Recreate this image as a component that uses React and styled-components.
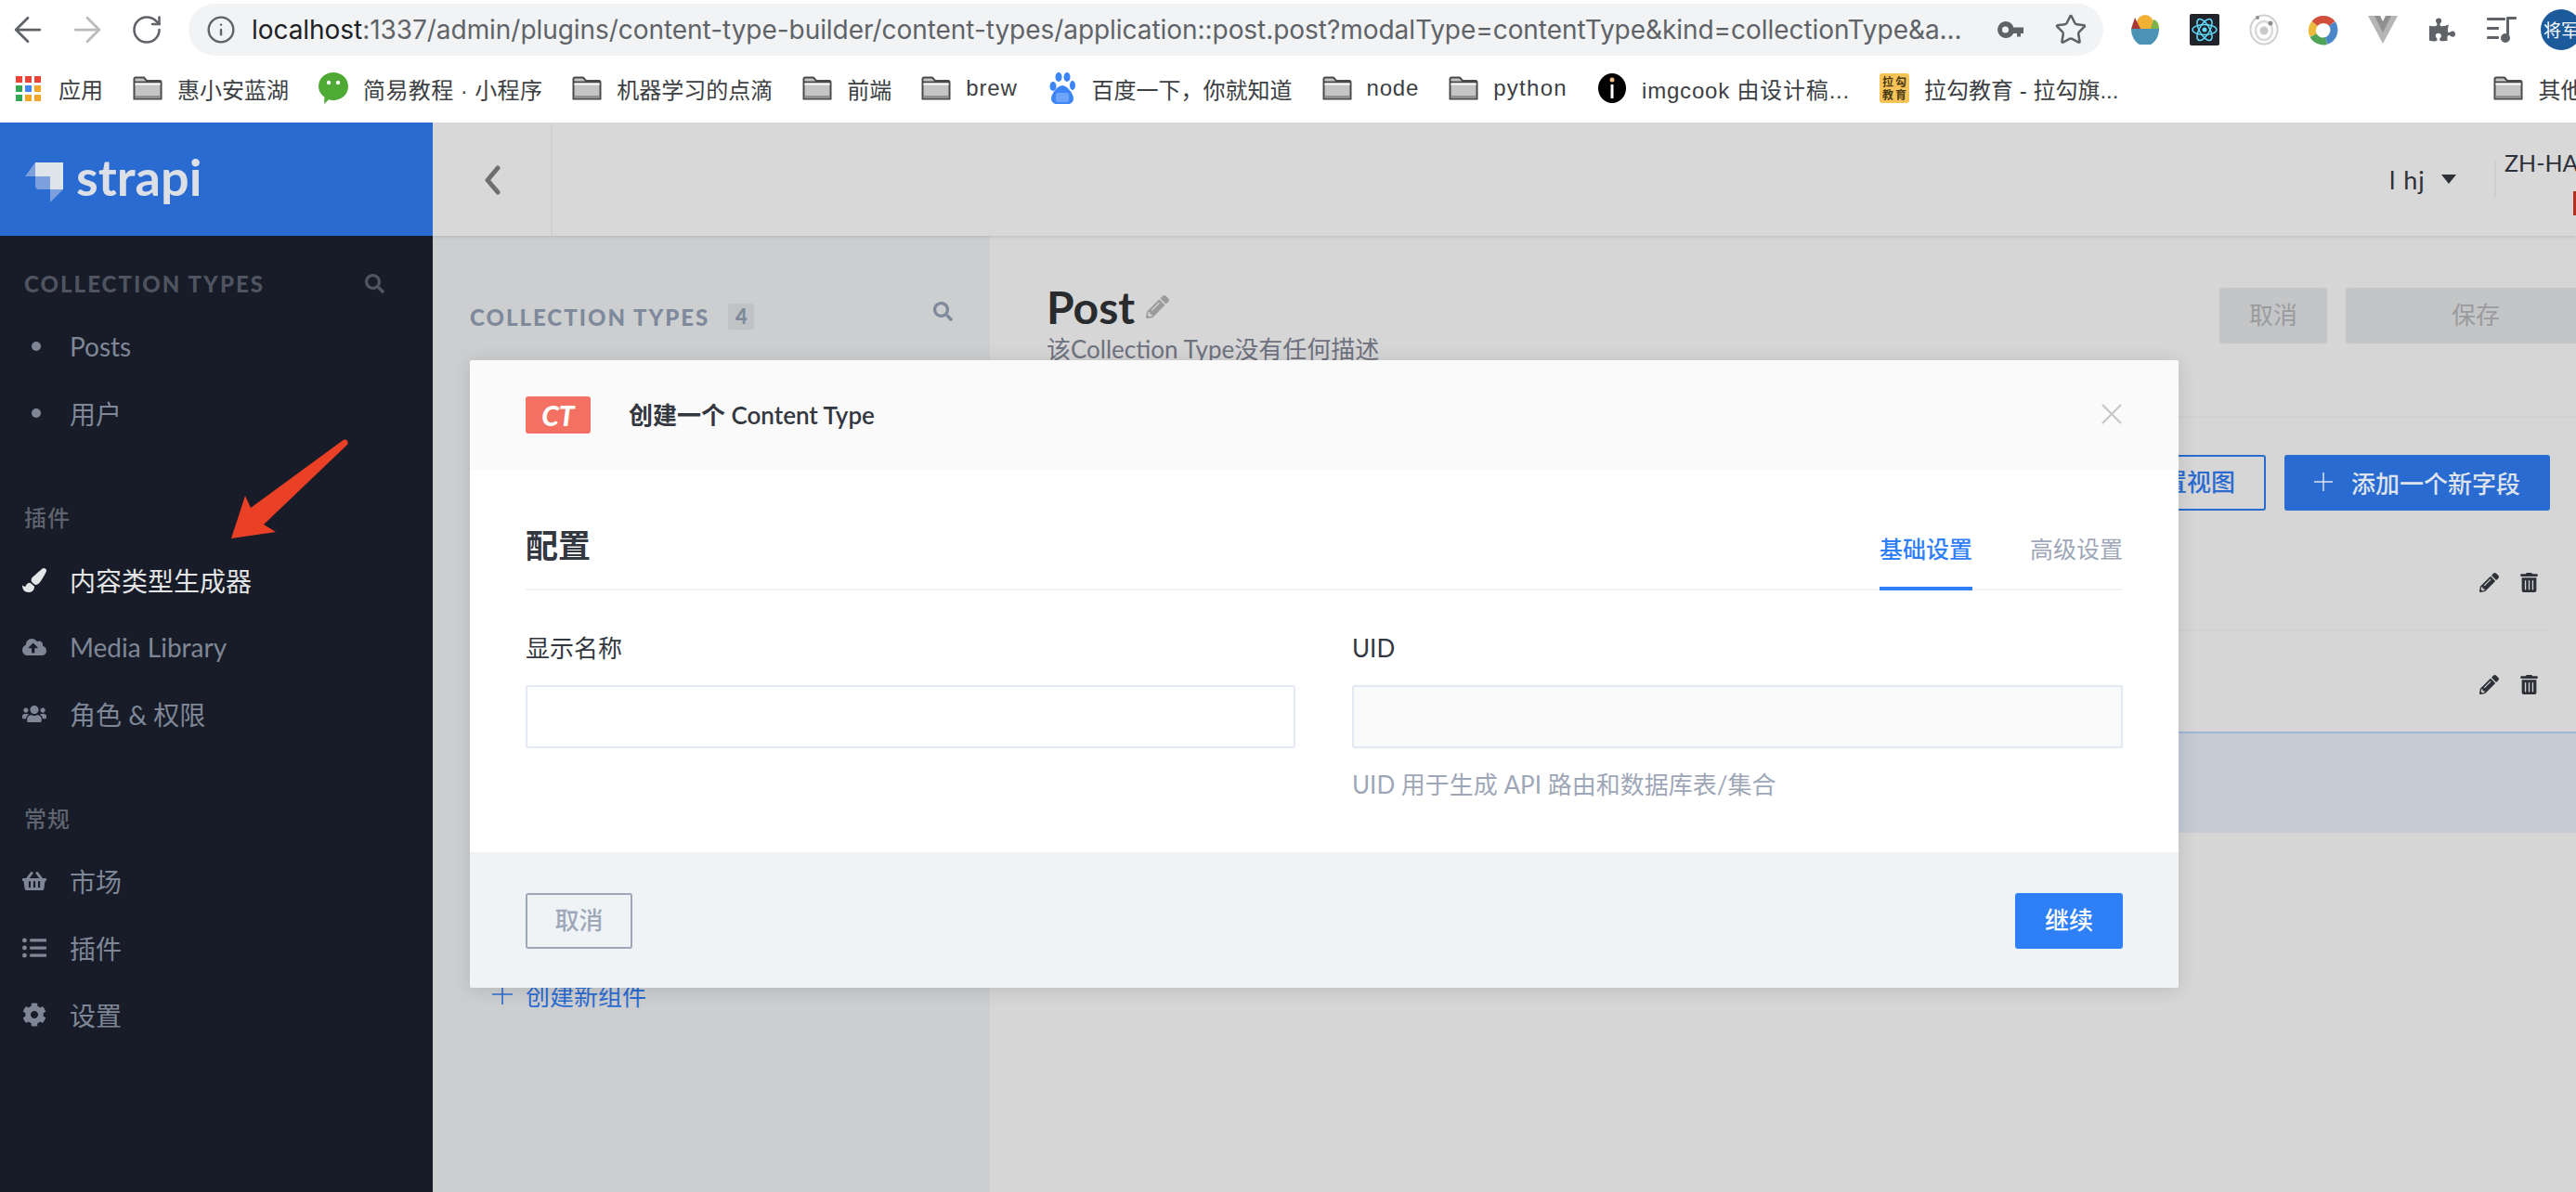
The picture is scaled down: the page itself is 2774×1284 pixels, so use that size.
import React from 'react';
import styled, { createGlobalStyle } from 'styled-components';
import { ArrowLeft, ArrowRight, RotateCw, Info, Star } from 'lucide-react';
import {
  FaSearch,
  FaPaintBrush,
  FaCloudUploadAlt,
  FaUsers,
  FaShoppingBasket,
  FaListUl,
  FaCog,
  FaPencilAlt,
  FaTrashAlt,
  FaPuzzlePiece,
} from 'react-icons/fa';

const CJK = `"Noto Sans CJK SC", sans-serif`;

const GlobalStyle = createGlobalStyle`
  html, body {
    margin: 0;
    padding: 0;
    height: 100%;
    overflow: hidden;
    background: #fff;
  }
  * { box-sizing: border-box; }
`;

const Page = styled.div`
  position: relative;
  width: 2774px;
  height: 1284px;
  overflow: hidden;
  font-family: Lato, ${CJK};
`;

/* browser */
const Toolbar = styled.div`
  display: flex;
  align-items: center;
  height: 64px;
  padding-left: 15px;
  background: #fff;
`;
const NavBtn = styled.div`
  display: flex;
  justify-content: center;
  width: 30px;
  margin-right: 34px;
  color: ${({ $off }) => ($off ? '#b9babc' : '#5f6368')};
  svg { flex-shrink: 0; }
`;
const UrlBar = styled.div`
  display: flex;
  align-items: center;
  flex: 0 0 2062px;
  height: 56px;
  margin-left: -4px;
  padding: 0 17px 0 19px;
  border-radius: 28px;
  background: #f1f3f4;
  color: #5f6368;
  svg { flex-shrink: 0; }
`;
const UrlText = styled.div`
  flex: 1;
  margin-left: 17px;
  font: 28px Inter, sans-serif;
  letter-spacing: -0.05px;
  white-space: nowrap;
  overflow: hidden;
  b {
    font-weight: 400;
    color: #202124;
  }
`;
const UrlIcon = styled.div`
  display: flex;
  margin-left: 32px;
  color: #5f6368;
`;
const Extensions = styled.div`
  display: flex;
  align-items: center;
  gap: 32px;
  margin-left: 29px;
`;
const ExtBox = styled.div`
  display: flex;
  justify-content: center;
  width: 32px;
  color: #5f6368;
`;
const Avatar = styled.div`
  flex: 0 0 44px;
  height: 44px;
  margin-left: -6px;
  border-radius: 50%;
  background: #1d5a9c;
  color: #fff;
  font: 19px/44px ${CJK};
  white-space: nowrap;
  padding-left: 3px;
  overflow: hidden;
`;
const Bookmarks = styled.div`
  display: flex;
  align-items: center;
  gap: 32px;
  height: 68px;
  padding: 0 0 6px 17px;
  background: #fff;
  white-space: nowrap;
`;
const Bookmark = styled.div`
  display: flex;
  align-items: center;
  gap: 16px;
  color: #3c4043;
  font: 24px "Liberation Sans", ${CJK};
  letter-spacing: ${({ $ls }) => $ls || 0}px;
`;
const AppsGrid = styled.div`
  display: grid;
  grid-template-columns: repeat(3, 7px);
  gap: 3px;
  margin-right: 3px;
`;
const AppDot = styled.i`
  display: block;
  height: 7px;
  background: ${({ $c }) => $c};
`;
const LagouIcon = styled.div`
  display: grid;
  grid-template-columns: 1fr 1fr;
  place-items: center;
  width: 32px;
  height: 32px;
  padding: 2px;
  border-radius: 3px;
  background: #f6c358;
  color: #4a3a12;
  font: 700 12px/14px ${CJK};
`;
const BarSeparator = styled.div`
  width: 2px;
  height: 32px;
  margin-left: 352px;
  margin-right: -12px;
  background: #d4d4d4;
`;

/* page */
const Workspace = styled.div`
  display: flex;
  height: 1152px;
`;
const Sidebar = styled.aside`
  flex: 0 0 466px;
  background: #171c28;
`;
const Logo = styled.div`
  display: flex;
  align-items: center;
  gap: 13px;
  height: 122px;
  padding: 0 0 4px 27px;
  background: #2a6bd2;
  color: #dcdfe5;
  font: 700 54px/1 Lato, sans-serif;
  svg { margin-top: 10px; }
`;
const SideBody = styled.div`
  padding-top: 30px;
`;
const SideSection = styled.section`
  margin-bottom: 55px;
`;
const SideHeading = styled.div`
  display: flex;
  align-items: center;
  justify-content: space-between;
  height: 40px;
  margin-bottom: 13px;
  padding: ${({ $cjk }) => ($cjk ? '0' : '2px')} 52px 0 26px;
  color: ${({ $cjk }) => ($cjk ? '#5f636e' : '#4f5460')};
  font-size: 24px;
  font-weight: ${({ $cjk }) => ($cjk ? 500 : 900)};
  letter-spacing: ${({ $cjk }) => ($cjk ? '1px' : '2.05px')};
`;
const NavItem = styled.div`
  display: flex;
  align-items: center;
  gap: 25px;
  height: 72px;
  padding-left: 24px;
  color: ${({ $active }) => ($active ? '#e4e5e6' : '#7f8797')};
  font-size: 28px;
`;
const NavIcon = styled.span`
  display: flex;
  justify-content: center;
  width: 26px;
`;
const Dot = styled.span`
  width: 10px;
  height: 10px;
  margin-left: 4px;
  border-radius: 50%;
  background: #7f8797;
`;
const ArrowMark = styled.svg`
  position: absolute;
  left: 245px;
  top: 470px;
`;

const Main = styled.div`
  flex: 1;
  min-width: 0;
  overflow: hidden;
`;
const TopBar = styled.header`
  display: flex;
  height: 122px;
  background: #d8d8d8;
  box-shadow: 0 1px 4px rgba(0, 0, 0, 0.12);
  position: relative;
`;
const BackBox = styled.div`
  display: flex;
  align-items: center;
  justify-content: center;
  width: 129px;
  margin-top: 2px;
  border-right: 2px solid #cfcfcf;
`;
const TopRight = styled.div`
  display: flex;
  align-items: center;
  flex: 0 0 201px;
  margin-left: auto;
  color: #2e3138;
  font: 24px Lato, sans-serif;
`;
const UserName = styled.span`
  font-size: 27px;
  letter-spacing: 1px;
  width: 56px;
  white-space: pre;
`;
const Caret = styled.span`
  flex: 0 0 16px;
  height: 0;
  border-left: 8px solid transparent;
  border-right: 8px solid transparent;
  border-top: 10px solid #2e3138;
`;
const LangBox = styled.div`
  flex: 0 0 88px;
  min-width: 0;
  height: 40px;
  margin-left: 41px;
  padding-left: 9px;
  border-left: 2px solid #cfcfcf;
  white-space: nowrap;
`;
const LangText = styled.div`
  margin-top: -14px;
  line-height: 32px;
  font-size: 25px;
`;
const Flag = styled.div`
  width: 30px;
  height: 26px;
  margin: 15px 0 0 74px;
  background: #b5301f;
`;
const Columns = styled.div`
  display: flex;
  height: 1030px;
`;
const SubNav = styled.div`
  flex: 0 0 600px;
  padding: 71px 40px 0;
  background: #cdced0;
`;
const SubHead = styled.div`
  display: flex;
  align-items: center;
  height: 32px;
  color: #7e899b;
  font-size: 24px;
  font-weight: 900;
  letter-spacing: 2px;
`;
const CountBadge = styled.span`
  width: 28px;
  height: 28px;
  margin-left: 20px;
  border-radius: 3px;
  background: #c0c2c6;
  font-size: 22px;
  line-height: 28px;
  text-align: center;
  letter-spacing: 0;
`;
const SubSearch = styled.span`
  display: flex;
  margin: -12px 0 0 auto;
`;
const AddLink = styled.div`
  display: flex;
  align-items: center;
  gap: 14px;
  height: 36px;
  margin: 696px 0 0 24px;
  color: #2a6bd2;
  font-size: 26px;
`;
const Content = styled.div`
  flex: 1;
  min-width: 0;
  background: #d6d6d6;
`;
const ContentHead = styled.div`
  display: flex;
  justify-content: space-between;
  height: 196px;
  padding: 48px 0 0 61px;
  border-bottom: 2px solid #d1d1d1;
`;
const PostTitle = styled.h1`
  display: flex;
  align-items: center;
  gap: 12px;
  margin: -1px 0 1px;
  height: 58px;
  color: #2a2b2e;
  font-size: 48px;
  font-weight: 700;
`;
const PostDesc = styled.div`
  margin-top: 0;
  color: #6e7180;
  font-size: 26px;
  line-height: 32px;
`;
const HeadActions = styled.div`
  display: flex;
  gap: 20px;
  margin: 8px -32px 0 0;
`;
const GhostBtn = styled.div`
  width: ${({ $w }) => $w}px;
  height: 60px;
  border-radius: 3px;
  background: #c4c5c7;
  color: #9a9b9d;
  font-size: 26px;
  line-height: 58px;
  text-align: center;
`;
const ContentBar = styled.div`
  display: flex;
  justify-content: flex-end;
  gap: 20px;
  margin-top: 40px;
  padding-right: 28px;
`;
const OutlineBtn = styled.div`
  height: 60px;
  padding: 0 31px;
  border: 2px solid #2a6bd2;
  border-radius: 3px;
  color: #2a6bd2;
  font-size: 26px;
  font-weight: 500;
  line-height: 54px;
`;
const PrimaryBtn = styled.div`
  display: flex;
  align-items: center;
  gap: 20px;
  width: 286px;
  height: 60px;
  padding: 0 0 2px 32px;
  border-radius: 3px;
  background: #2a6bd2;
  color: #dfe4ec;
  font-size: 26px;
  font-weight: 500;
`;
const FieldRow = styled.div`
  display: flex;
  justify-content: flex-end;
  align-items: center;
  gap: 22px;
  height: ${({ $h }) => $h}px;
  margin-right: 28px;
  padding: 6px 12px 0 0;
  color: #2e3138;
  border-bottom: ${({ $line }) => ($line ? '2px solid #d1d1d1' : '0')};
`;
const NewRow = styled.div`
  height: 109px;
  border-top: 2px solid #a0b6d4;
  background: #c5cbd5;
`;
const RowList = styled.div`
  margin-top: 21px;
`;

/* modal */
const Modal = styled.div`
  position: absolute;
  left: 506px;
  top: 388px;
  display: flex;
  flex-direction: column;
  width: 1840px;
  height: 676px;
  border-radius: 3px;
  background: #fff;
  box-shadow: 0 2px 20px rgba(0, 0, 0, 0.12);
  overflow: hidden;
`;
const ModalHead = styled.div`
  display: flex;
  align-items: center;
  height: 118px;
  padding: 0 60px;
  background: #fafafa;
`;
const CtBadge = styled.span`
  width: 70px;
  height: 40px;
  border-radius: 3px;
  background: #f37063;
  color: #fff;
  font-size: 30px;
  font-weight: 900;
  font-style: italic;
  line-height: 40px;
  text-align: center;
`;
const ModalTitle = styled.div`
  flex: 1;
  margin: -3px 0 0 41px;
  color: #333740;
  font-size: 26px;
  font-weight: 600;
`;
const CloseIcon = styled.span`
  display: flex;
  margin: -2px 1px 0 0;
  color: #c3c5c8;
`;
const ModalBody = styled.div`
  flex: 1;
  padding: 0 60px;
`;
const TitleRow = styled.div`
  display: flex;
  align-items: flex-end;
  justify-content: space-between;
  height: 130px;
  border-bottom: 2px solid #f3f4f8;
`;
const SectionTitle = styled.h2`
  margin: 0 0 22px;
  color: #333740;
  font-size: 35px;
  font-weight: 600;
  line-height: 50px;
`;
const Tabs = styled.div`
  display: flex;
  gap: 62px;
  margin-bottom: -2px;
`;
const Tab = styled.div`
  padding-bottom: 23px;
  border-bottom: 4px solid ${({ $on }) => ($on ? '#2f80f6' : 'transparent')};
  color: ${({ $on }) => ($on ? '#2f80f6' : '#9ea7b8')};
  font-size: 25px;
  font-weight: ${({ $on }) => ($on ? 500 : 400)};
  line-height: 36px;
`;
const FieldGrid = styled.div`
  display: grid;
  grid-template-columns: 829px 830px;
  gap: 61px;
  margin-top: 44px;
`;
const Label = styled.div`
  color: #333740;
  font-size: 26px;
  line-height: 36px;
`;
const TextBox = styled.div`
  height: 68px;
  margin-top: 22px;
  border: 2px solid #e3e9f3;
  border-radius: 3px;
  background: ${({ $off }) => ($off ? '#fafafa' : '#fff')};
`;
const Hint = styled.div`
  margin-top: 21px;
  color: #9ea7b8;
  font-size: 26px;
  line-height: 36px;
`;
const ModalFoot = styled.div`
  display: flex;
  justify-content: space-between;
  height: 146px;
  padding: 44px 60px 0;
  background: #eff3f6;
`;
const CancelBtn = styled.div`
  width: 115px;
  height: 60px;
  border: 2px solid #9ea7b8;
  border-radius: 3px;
  color: #9ea7b8;
  font-size: 26px;
  font-weight: 500;
  line-height: 54px;
  text-align: center;
`;
const ContinueBtn = styled.div`
  width: 116px;
  height: 60px;
  border-radius: 3px;
  background: #2f80f6;
  color: #fff;
  font-size: 26px;
  font-weight: 500;
  line-height: 58px;
  text-align: center;
`;

const ThinPlus = ({ size }) => (
  <svg width={size} height={size} viewBox="0 0 22 22" stroke="currentColor" strokeWidth="1.6">
    <path d="M11 0v22M0 11h22" />
  </svg>
);

const ThinX = () => (
  <svg width="22" height="22" viewBox="0 0 22 22" stroke="currentColor" strokeWidth="2">
    <path d="M1 1l20 20M21 1L1 21" />
  </svg>
);

const Folder = () => (
  <svg width="32" height="26" viewBox="0 0 32 26">
    <path d="M1.5 24.5V3a1.5 1.5 0 0 1 1.5-1.5h9l3 3.5h14a1.5 1.5 0 0 1 1.5 1.5v18z" fill="#c4c4c4" stroke="#4a4a4a" strokeWidth="2" />
    <path d="M2 6.5h28" stroke="#4a4a4a" strokeWidth="2" />
    <path d="M2.5 7.5h27v2h-27z" fill="#fff" />
    <path d="M2.5 21h27v3h-27z" fill="#8f8f8f" />
  </svg>
);

const WeChat = () => (
  <svg width="32" height="36" viewBox="0 0 32 36">
    <path d="M16 1c8.8 0 16 6.6 16 15s-7.2 15-16 15c-1.800 0-3.500-.3-5-.8L6 35l.5-7.500C2.500 24.700 0 20.600 0 16 0 7.600 7.200 1 16 1z" fill="#4faa35" />
    <circle cx="11" cy="12" r="2.200" fill="#fff" />
    <circle cx="21" cy="12" r="2.200" fill="#fff" />
  </svg>
);

const Baidu = () => (
  <svg width="32" height="34" viewBox="-2 0 32 34">
    <g fill="#3d84f7">
      <ellipse cx="4" cy="15" rx="3.500" ry="5" />
      <ellipse cx="10" cy="5" rx="3.500" ry="5" />
      <ellipse cx="19" cy="5" rx="3.500" ry="5" />
      <ellipse cx="25" cy="14" rx="3" ry="5" />
      <path d="M14 14c5 0 12 9 12 14 0 4-3 6-6 6H8c-3 0-6-2-6-6 0-5 7-14 12-14z" />
    </g>
    <rect x="7" y="22" width="14" height="10" rx="2" fill="#fff" opacity=".25" />
  </svg>
);

const ImgCook = () => (
  <svg width="32" height="32" viewBox="0 0 32 32">
    <ellipse cx="16" cy="16" rx="15" ry="16" fill="#000" />
    <rect x="14.500" y="12" width="3" height="15" fill="#fff" />
    <circle cx="16" cy="7" r="2.500" fill="#f0bb84" />
  </svg>
);

const Key = () => (
  <svg width="30" height="20" viewBox="0 0 30 20">
    <path fillRule="evenodd" d="M9.500 1a9 9 0 0 1 8.700 6.500H29v6.500h-3v3.500h-4V14h-3.800A9 9 0 1 1 9.500 1zm0 5.500a3.500 3.500 0 1 0 0 7 3.500 3.500 0 0 0 0-7z" fill="#5f6368" />
  </svg>
);

const Bowl = () => (
  <svg width="32" height="34" viewBox="0 0 32 34">
    <circle cx="16" cy="10" r="9" fill="#f2b134" />
    <path d="M1 16L5 4l6 12z" fill="#a8393a" />
    <path d="M22 16l3-10c4 1 6 5 6 10z" fill="#7db24a" />
    <path d="M1 16h30c0 9-5 15-9 17H10C6 31 1 25 1 16z" fill="#4a93b5" />
  </svg>
);

const ReactExt = () => (
  <svg width="32" height="34" viewBox="0 0 32 34">
    <rect width="32" height="34" rx="2" fill="#20232a" />
    <g fill="none" stroke="#61dafb" strokeWidth="1.500">
      <ellipse cx="16" cy="17" rx="13" ry="5.500" />
      <ellipse cx="16" cy="17" rx="13" ry="5.500" transform="rotate(60 16 17)" />
      <ellipse cx="16" cy="17" rx="13" ry="5.500" transform="rotate(120 16 17)" />
    </g>
    <circle cx="16" cy="17" r="2.500" fill="#61dafb" />
  </svg>
);

const RingExt = () => (
  <svg width="32" height="34" viewBox="0 0 32 34">
    <ellipse cx="16" cy="17" rx="14.500" ry="15.500" fill="none" stroke="#cfcfcf" strokeWidth="2" />
    <ellipse cx="16" cy="18" rx="9" ry="10" fill="none" stroke="#dadada" strokeWidth="2.500" />
    <circle cx="16" cy="18" r="4.500" fill="#c9c9c9" />
    <circle cx="23" cy="10" r="2.500" fill="#8f8f8f" />
    <circle cx="9" cy="4" r="2" fill="#8f8f8f" />
  </svg>
);

const GoogleRing = () => (
  <svg width="32" height="34" viewBox="0 0 32 34" fill="none" strokeWidth="8">
    <path d="M6.500 10.500A12.500 12.500 0 0 1 25.500 10.500" stroke="#d0503c" />
    <path d="M25.500 10.500A12.500 12.500 0 0 1 19 29" stroke="#4a86c8" />
    <path d="M19 29A12.500 12.500 0 0 1 5 23" stroke="#4fa458" />
    <path d="M5 23A12.500 12.500 0 0 1 6.500 10.500" stroke="#edb93b" />
  </svg>
);

const VueExt = () => (
  <svg width="32" height="30" viewBox="0 0 32 30">
    <path d="M0 0h12l4 7 4-7h12L16 30z" fill="#b5b5b5" />
    <path d="M7 0h6l3 6 3-6h6L16 18z" fill="#8f8f8f" />
  </svg>
);

const MusicExt = () => (
  <svg width="32" height="30" viewBox="0 0 32 30" fill="#5f6368">
    <rect x="0" y="2" width="20" height="3" rx="1" />
    <rect x="0" y="12" width="13" height="3" rx="1" />
    <rect x="0" y="22" width="13" height="3" rx="1" />
    <rect x="21" y="2" width="3" height="22" />
    <rect x="21" y="1" width="11" height="3" rx="1" />
    <circle cx="20" cy="24" r="5" />
  </svg>
);

const StrapiMark = () => (
  <svg width="42" height="43" viewBox="0 0 42 43" fill="#dfe3ea">
    <path d="M11 0H41V29H27V15H11Z" />
    <path d="M11 0V15H0Z" opacity=".45" />
    <path d="M11 15H27V29H15a4 4 0 0 1-4-4Z" opacity=".45" />
    <path d="M27 29H41L27 43Z" opacity=".45" />
  </svg>
);

const bookmarks = [
  ['惠小安蓝湖', <Folder key="f" />, 0],
  ['简易教程 · 小程序', <WeChat key="w" />, 0.4],
  ['机器学习的点滴', <Folder key="f" />, 0],
  ['前端', <Folder key="f" />, 0],
  ['brew', <Folder key="f" />, 0.8],
  ['百度一下，你就知道', <Baidu key="b" />, 0],
  ['node', <Folder key="f" />, 0.8],
  ['python', <Folder key="f" />, 1.3],
  ['imgcook 由设计稿...', <ImgCook key="i" />, 0.8],
];

const appDots = ['#ea4335', '#ea4335', '#ea4335', '#34a853', '#4285f4', '#f4a629', '#34a853', '#f4a629', '#f4a629'];

const BrowserBars = () => (
  <>
    <Toolbar>
      <NavBtn><ArrowLeft size={44} strokeWidth={1.5} /></NavBtn>
      <NavBtn $off><ArrowRight size={44} strokeWidth={1.5} /></NavBtn>
      <NavBtn><RotateCw size={36} strokeWidth={1.7} /></NavBtn>
      <UrlBar>
        <Info size={32} strokeWidth={1.8} />
        <UrlText>
          <b>localhost</b>:1337/admin/plugins/content-type-builder/content-types/application::post.post?modalType=contentType&amp;kind=collectionType&amp;a...
        </UrlText>
        <UrlIcon><Key /></UrlIcon>
        <UrlIcon><Star size={36} strokeWidth={1.7} /></UrlIcon>
      </UrlBar>
      <Extensions>
        <ExtBox><Bowl /></ExtBox>
        <ExtBox><ReactExt /></ExtBox>
        <ExtBox><RingExt /></ExtBox>
        <ExtBox><GoogleRing /></ExtBox>
        <ExtBox><VueExt /></ExtBox>
        <ExtBox><FaPuzzlePiece size={28} /></ExtBox>
        <ExtBox><MusicExt /></ExtBox>
        <Avatar>将军</Avatar>
      </Extensions>
    </Toolbar>
    <Bookmarks>
      <Bookmark>
        <AppsGrid>
          {appDots.map((c, i) => <AppDot key={i} $c={c} />)}
        </AppsGrid>
        应用
      </Bookmark>
      {bookmarks.map(([label, icon, ls]) => (
        <Bookmark key={label} $ls={ls}>{icon}{label}</Bookmark>
      ))}
      <Bookmark>
        <LagouIcon><span>拉</span><span>勾</span><span>教</span><span>育</span></LagouIcon>
        拉勾教育 - 拉勾旗...
      </Bookmark>
      <BarSeparator />
      <Bookmark><Folder />其他书签</Bookmark>
    </Bookmarks>
  </>
);

const SideNav = () => (
  <Sidebar>
    <Logo><StrapiMark />strapi</Logo>
    <SideBody>
      <SideSection>
        <SideHeading>COLLECTION TYPES <FaSearch size={21} /></SideHeading>
        <NavItem><NavIcon><Dot /></NavIcon>Posts</NavItem>
        <NavItem><NavIcon><Dot /></NavIcon>用户</NavItem>
      </SideSection>
      <SideSection>
        <SideHeading $cjk>插件</SideHeading>
        <NavItem $active><NavIcon><FaPaintBrush size={26} /></NavIcon>内容类型生成器</NavItem>
        <NavItem><NavIcon><FaCloudUploadAlt size={26} /></NavIcon>Media Library</NavItem>
        <NavItem><NavIcon><FaUsers size={26} /></NavIcon>角色 &amp; 权限</NavItem>
      </SideSection>
      <SideSection>
        <SideHeading $cjk>常规</SideHeading>
        <NavItem><NavIcon><FaShoppingBasket size={26} /></NavIcon>市场</NavItem>
        <NavItem><NavIcon><FaListUl size={26} /></NavIcon>插件</NavItem>
        <NavItem><NavIcon><FaCog size={26} /></NavIcon>设置</NavItem>
      </SideSection>
    </SideBody>
  </Sidebar>
);

const CreateModal = () => (
  <Modal>
    <ModalHead>
      <CtBadge>CT</CtBadge>
      <ModalTitle>创建一个 Content Type</ModalTitle>
      <CloseIcon><ThinX /></CloseIcon>
    </ModalHead>
    <ModalBody>
      <TitleRow>
        <SectionTitle>配置</SectionTitle>
        <Tabs>
          <Tab $on>基础设置</Tab>
          <Tab>高级设置</Tab>
        </Tabs>
      </TitleRow>
      <FieldGrid>
        <div>
          <Label>显示名称</Label>
          <TextBox />
        </div>
        <div>
          <Label>UID</Label>
          <TextBox $off />
          <Hint>UID 用于生成 API 路由和数据库表/集合</Hint>
        </div>
      </FieldGrid>
    </ModalBody>
    <ModalFoot>
      <CancelBtn>取消</CancelBtn>
      <ContinueBtn>继续</ContinueBtn>
    </ModalFoot>
  </Modal>
);

const App = () => (
  <Page>
    <GlobalStyle />
    <BrowserBars />
    <Workspace>
      <SideNav />
      <Main>
        <TopBar>
          <BackBox>
            <svg width="20" height="32" viewBox="0 0 20 32">
              <path d="M16 3L5 16l11 13" fill="none" stroke="#6d6e70" strokeWidth="5" strokeLinecap="round" strokeLinejoin="round" />
            </svg>
          </BackBox>
          <TopRight>
            <UserName>l hj</UserName>
            <Caret />
            <LangBox>
              <LangText>ZH-HANS</LangText>
              <Flag />
            </LangBox>
          </TopRight>
        </TopBar>
        <Columns>
          <SubNav>
            <SubHead>
              COLLECTION TYPES
              <CountBadge>4</CountBadge>
              <SubSearch><FaSearch size={21} /></SubSearch>
            </SubHead>
            <AddLink><ThinPlus size={22} />创建新组件</AddLink>
          </SubNav>
          <Content>
            <ContentHead>
              <div>
                <PostTitle>Post <FaPencilAlt size={25} color="#9a9b9d" /></PostTitle>
                <PostDesc>该Collection Type没有任何描述</PostDesc>
              </div>
              <HeadActions>
                <GhostBtn $w={116}>取消</GhostBtn>
                <GhostBtn $w={280}>保存</GhostBtn>
              </HeadActions>
            </ContentHead>
            <ContentBar>
              <OutlineBtn>配置视图</OutlineBtn>
              <PrimaryBtn><ThinPlus size={20} />添加一个新字段</PrimaryBtn>
            </ContentBar>
            <RowList>
              <FieldRow $h={109} $line><FaPencilAlt size={21} /><FaTrashAlt size={21} /></FieldRow>
              <FieldRow $h={108}><FaPencilAlt size={21} /><FaTrashAlt size={21} /></FieldRow>
              <NewRow />
            </RowList>
          </Content>
        </Columns>
      </Main>
    </Workspace>
    <ArrowMark width="134" height="114" viewBox="0 0 134 114">
      <path d="M4 110L19 64l6 13L124 4.500c2-1.500 4-1 5 .5s1 3-.5 4.500L39 95l13 8z" fill="#ea4025" />
    </ArrowMark>
    <CreateModal />
  </Page>
);

export default App;
